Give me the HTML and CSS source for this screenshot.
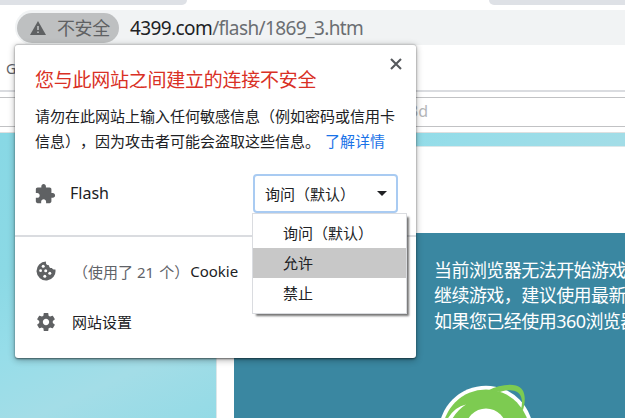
FILE: index.html
```
<!DOCTYPE html>
<html lang="zh-CN">
<head>
<meta charset="utf-8">
<title>4399</title>
<link rel="stylesheet" href="styles.css">
</head>
<body>
<div class="browser">
  <div class="tabs"><div class="tab-left"></div><div class="tab-right"></div></div>
  <div class="toolbar">
    <div class="omnibox">
      <div class="chip">
        <svg width="16" height="14" viewBox="0 0 16 14"><path fill="#5f6163" d="M8 0 16 14H0z"/><path stroke="#bec0c1" stroke-width="1.6" d="M8 5v4M8 10.5v1.6"/></svg>
        <span>不安全</span>
      </div>
      <div class="url">4399.com<span>/flash/1869_3.htm</span></div>
    </div>
  </div>
  <div class="bookmarks">G</div>
  <div class="page-head"><div class="search">3d</div></div>
  <div class="page">
    <div class="sheet">
      <div class="game">
        <p>当前浏览器无法开始游戏</p>
        <p>继续游戏，建议使用最新</p>
        <p>如果您已经使用<span class="num">360</span>浏览器</p>
        <svg class="logo" width="100" height="40" viewBox="435 382 100 40">
          <circle cx="486" cy="434" r="47.3" fill="#fff"/>
          <circle cx="486" cy="434" r="43.5" fill="#7dcb51"/>
          <circle cx="486" cy="430" r="20.5" fill="#fff"/>
          <path fill="#fff" d="M447 421Q454 408 466 405.500Q457 411 451 422z"/>
          <path fill="#7dcb51" d="M488 391.500C497 387 508 384.500 516 386.500C524 388.500 527 397 523 411L521 410C524 399 520 392 512 391.500C508 391 504 391.500 500 393z"/>
        </svg>
      </div>
    </div>
  </div>
</div>

<div class="popup">
  <div class="info">
    <h1>您与此网站之间建立的连接不安全</h1>
    <svg class="close" width="12" height="12" viewBox="0 0 12 12"><path d="M1 1 11 11M11 1 1 11" stroke="#55585c" stroke-width="2.100" fill="none"/></svg>
    <p>请勿在此网站上输入任何敏感信息（例如密码或信用卡<br>信息），因为攻击者可能会盗取这些信息。<a>了解详情</a></p>
  </div>
  <div class="permission">
    <svg width="22" height="22" viewBox="0 0 24 24"><path fill="#5f6163" d="M20.500 11H19V7c0-1.100-.9-2-2-2h-4V3.500C13 2.120 11.880 1 10.500 1S8 2.120 8 3.500V5H4c-1.100 0-1.990.9-1.990 2v3.800H3.500c1.490 0 2.700 1.210 2.700 2.700s-1.210 2.700-2.700 2.700H2V20c0 1.100.9 2 2 2h3.800v-1.500c0-1.490 1.210-2.700 2.700-2.700 1.490 0 2.700 1.210 2.700 2.700V22H17c1.100 0 2-.9 2-2v-4h1.500c1.380 0 2.500-1.120 2.500-2.500S21.880 11 20.500 11z"/></svg>
    <span class="name">Flash</span>
    <div class="select"><span>询问（默认）</span><i></i>
      <div class="menu"><div>询问（默认）</div><div class="on">允许</div><div>禁止</div></div>
    </div>
  </div>
  <div class="links">
    <div class="row">
      <svg class="cookie-icon" width="20" height="20" viewBox="0 0 20 20"><path fill="#5f6163" d="M10 .5C9.500 3 11 4.500 13 4.200C12.800 6.300 14.500 7.500 16 7C16.500 8.300 18 8.800 19.400 8.500A9.500 9.500 0 1 1 10 .5z"/><g fill="#fff"><circle cx="7.200" cy="5.200" r="1.500"/><circle cx="4.600" cy="9.700" r="1.400"/><circle cx="9.700" cy="9.800" r="1.500"/><circle cx="13.800" cy="12.200" r="1.500"/><circle cx="8.800" cy="15.300" r="1.500"/></g></svg>
      <span class="cookie"><span>（使用了<b>21</b>个）</span><em>Cookie</em></span>
    </div>
    <div class="row">
      <svg width="22" height="22" viewBox="1 1 22 22"><path fill="#5f6163" d="M19.430 12.980c.04-.32.070-.64.070-.98s-.03-.66-.07-.98l2.110-1.650c.19-.15.240-.42.120-.64l-2-3.460c-.12-.22-.39-.3-.61-.22l-2.490 1c-.52-.4-1.080-.73-1.690-.98l-.38-2.650C14.460 2.180 14.250 2 14 2h-4c-.25 0-.46.180-.49.420l-.38 2.650c-.61.250-1.170.590-1.690.980l-2.490-1c-.23-.09-.49 0-.61.220l-2 3.460c-.13.220-.07.490.120.640l2.110 1.650c-.04.320-.07.650-.07.980s.03.660.070.980l-2.110 1.650c-.19.150-.24.420-.12.640l2 3.460c.12.220.39.300.61.220l2.490-1c.52.400 1.080.730 1.690.980l.38 2.650c.03.240.24.420.49.420h4c.25 0 .46-.18.49-.42l.38-2.650c.61-.25 1.170-.59 1.690-.98l2.490 1c.23.090.49 0 .61-.22l2-3.460c.12-.22.070-.49-.12-.64l-2.110-1.650zM12 15.500c-1.930 0-3.500-1.570-3.500-3.500s1.570-3.500 3.500-3.500 3.500 1.570 3.500 3.500-1.570 3.500-3.500 3.500z"/></svg>
      <span class="settings">网站设置</span>
    </div>
  </div>
</div>
</body>
</html>
```
FILE: styles.css
```
* { box-sizing: border-box; }
body { margin: 0; overflow: hidden; background: #fff; font-family: "Noto Sans", "Noto Sans CJK SC", sans-serif; text-spacing-trim: space-all; color: #202124; }
p, h1 { margin: 0; font-weight: 400; }
svg { display: block; flex: none; }

.browser { width: 625px; height: 418px; display: flex; flex-direction: column; overflow: hidden; }
.tabs { height: 5px; flex: none; display: flex; justify-content: space-between; }
.tab-left { width: 187px; background: #dee1e6; border-bottom-right-radius: 6px; }
.tab-right { width: 136px; background: #dee1e6; border-bottom-left-radius: 6px; }
.toolbar { height: 40px; flex: none; padding: 5px 0 0 15px; }
.omnibox { height: 35px; display: flex; align-items: center; padding-left: 2px; background: #f1f3f4; border-radius: 18px 0 0 18px; }
.chip { width: 102px; height: 30px; display: flex; align-items: center; gap: 11px; padding-left: 13px; border-radius: 15px; background: #bec0c1; color: #5f6163; font: 18px/28px "Noto Sans CJK SC", sans-serif; letter-spacing: -.4px; white-space: nowrap; }
.chip span { margin-top: -2px; }
.url { margin: 0 0 0 11px; font-size: 19px; line-height: 30px; letter-spacing: -.6px; white-space: nowrap; }
.url span { color: #6b6e72; }
.bookmarks { height: 47px; flex: none; border-bottom: 2px solid #dadce0; padding-left: 6px; font-size: 14px; line-height: 47px; color: #5f6368; }
.page-head { height: 41px; flex: none; padding-top: 5px; border-bottom: 1px solid #dfe0e0; }
.search { height: 30px; border: solid #c1c2c4; border-width: 1px 0; padding-left: 409px; font-size: 16px; line-height: 27px; color: #b5b7b9; }
.page { flex: 1; padding: 13px 0 0 216px; background: linear-gradient(155deg, #88d8e5 0, #8bd9e5 25%, #96dde9 38%, #a3dde7 52%, #8bd9e5 75%); }
.sheet { height: 272px; padding: 86px 0 0 17px; background: #fff; border: solid #dce7e9; border-width: 1px 0 0 1px; }
.game { height: 186px; padding: 24px 0 0 200px; background: #3a87a1; color: #fff; font: 18px/25.300px "Noto Sans CJK SC", sans-serif; letter-spacing: -.55px; white-space: nowrap; overflow: hidden; }
.num { font-family: "Noto Sans", sans-serif; line-height: 1; }
.logo { margin: 48px 0 0 1px; }

.popup { position: absolute; left: 15px; top: 44px; width: 401px; height: 314px; display: flex; flex-direction: column; background: #fff; border-top: 1px solid #c4c5c6; border-radius: 3px; box-shadow: 0 1px 2px rgba(0,0,0,.5), 0 2px 7px rgba(0,0,0,.32); }
.info { height: 111px; display: grid; grid-template-columns: 1fr 12px; grid-template-rows: 44px 50px; padding: 13px 14px 0 20px; }
.info h1 { font-size: 19px; line-height: 44px; letter-spacing: -.25px; color: #d93025; white-space: nowrap; }
.info p { grid-column: 1 / 3; font: 15px/25px "Noto Sans CJK SC", sans-serif; margin-top: 1px; white-space: nowrap; }
.info a { margin-left: 5px; color: #1a73e8; }
.permission { height: 81px; flex: none; display: flex; align-items: flex-start; padding: 18px 18px 0 18px; border-bottom: 2px solid #dadce0; }
.permission > svg { margin: 9px 1px 0; }
.name { margin-left: 13px; flex: 1; font-size: 16px; line-height: 38px; }
.select { position: relative; width: 145px; height: 39px; border: 2px solid #a9cbf2; border-radius: 4px; display: flex; align-items: center; justify-content: space-between; padding: 0 9px 0 10px; font: 15px/30px "Noto Sans CJK SC", sans-serif; white-space: nowrap; }
.select i { border: 5px solid transparent; border-top-color: #202124; border-bottom: 0; }
.menu { position: absolute; left: -3px; top: 37px; width: 155px; height: 101px; padding: 4px 0; background: #fff; border: 1px solid #dadce0; box-shadow: 3px 3px 2px -1px rgba(0,0,0,.55); }
.menu div { height: 30px; padding-left: 30px; }
.menu .on { background: #c8c8c8; }
.links { padding: 10px 0 0 21px; }
.row { height: 50px; display: flex; align-items: center; }
.row svg { width: 20px; margin-top: -1px; }
.row .cookie-icon { margin-top: -2px; }
.cookie { margin: -1px 0 0 17px; font-size: 15px; display: flex; }
.cookie span { color: #5f6368; font-family: "Noto Sans CJK SC", sans-serif; }
.cookie b { font: 15px "Noto Sans", sans-serif; margin: 0 5px 0 4px; }
.cookie em { font-style: normal; margin-left: 1px; }
.settings { margin-left: 16px; font: 15px/30px "Noto Sans CJK SC", sans-serif; }
```
